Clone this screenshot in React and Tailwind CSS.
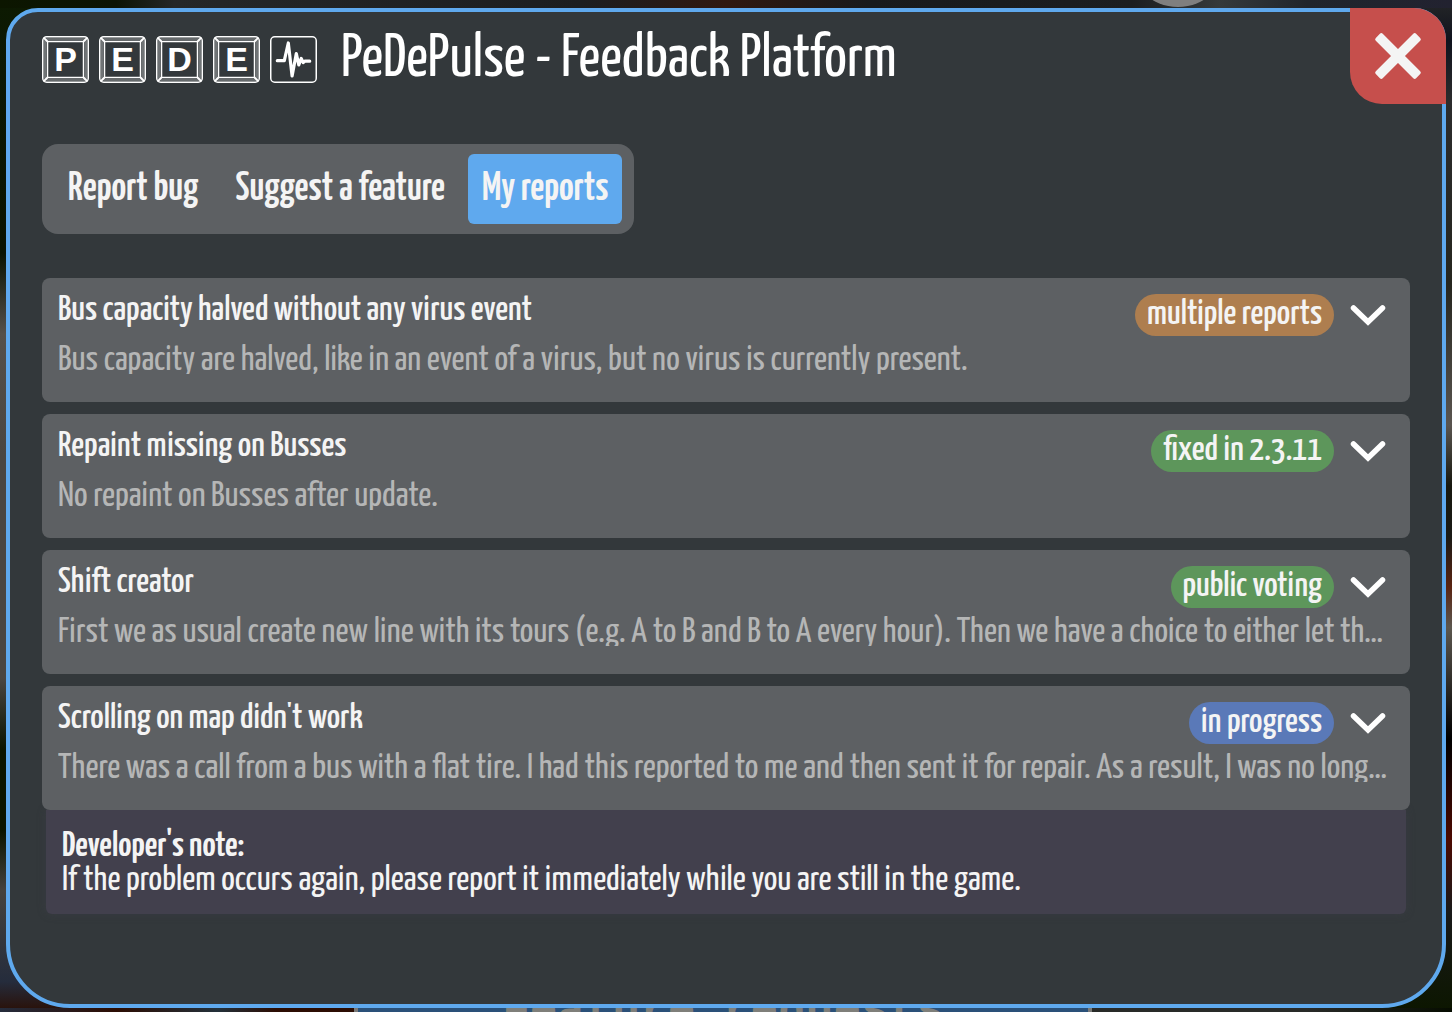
import React from "react";

const REPORTS = [
  {
    title: "Bus capacity halved without any virus event",
    text: "Bus capacity are halved, like in an event of a virus, but no virus is currently present.",
    status: "multiple reports",
    color: "bg-[#ae7e4f]",
  },
  {
    title: "Repaint missing on Busses",
    text: "No repaint on Busses after update.",
    status: "fixed in 2.3.11",
    color: "bg-[#5d965b]",
  },
  {
    title: "Shift creator",
    text: "First we as usual create new line with its tours (e.g. A to B and B to A every hour). Then we have a choice to either let th…",
    status: "public voting",
    color: "bg-[#5d965b]",
  },
  {
    title: "Scrolling on map didn't work",
    text: "There was a call from a bus with a flat tire. I had this reported to me and then sent it for repair. As a result, I was no long…",
    status: "in progress",
    color: "bg-[#5a79b8]",
    note: "If the problem occurs again, please report it immediately while you are still in the game.",
  },
];

const TABS = ["Report bug", "Suggest a feature", "My reports"];

function Key({ letter }) {
  return (
    <svg viewBox="0 0 47 47" className="size-[47px]" fill="none" stroke="#fff">
      <rect x="0.75" y="0.75" width="45.5" height="45.5" rx="4" strokeWidth="1.5" />
      <rect x="3" y="3" width="41" height="41" rx="2" strokeWidth="1.2" opacity="0.5" />
      <rect x="5.5" y="5.5" width="36" height="36" strokeWidth="1.5" />
      <path d="M1.5 1.5l4 4M45.5 1.5l-4 4M1.5 45.5l4-4M45.5 45.5l-4-4" strokeWidth="1.8" />
      <text
        x="23.5"
        y="35"
        textAnchor="middle"
        fill="#fff"
        stroke="none"
        className="font-['Liberation_Sans'] text-[34px] font-bold"
      >
        {letter}
      </text>
    </svg>
  );
}

function Logo() {
  return (
    <div className="flex gap-2.5" aria-label="PEDE Pulse">
      <Key letter="P" />
      <Key letter="E" />
      <Key letter="D" />
      <Key letter="E" />
      <svg viewBox="0 0 47 47" className="size-[47px]" fill="none" stroke="#fff">
        <rect x="0.75" y="0.75" width="45.5" height="45.5" rx="4" strokeWidth="1.5" />
        <path
          d="M7.3 24.7h7L18.3 7l3.8 33 4.2-22.5 2.5 11.5 2.4-6.500 2 4 1.5-1.300h5"
          strokeWidth="3.2"
          strokeLinecap="round"
          strokeLinejoin="round"
        />
      </svg>
    </div>
  );
}

function Backdrop() {
  return (
    <div
      aria-hidden="true"
      className="absolute inset-0 overflow-hidden bg-[linear-gradient(180deg,#0d1a02_0%,#0a1303_25%,#55504a_33%,#4a4642_45%,#4a4642_67%,#0a1400_74%,#0a1400_82%,#45423e_88%,#252c3c_97%,#2a0f05_100%)]"
    >
      <div className="absolute inset-y-0 right-0 w-1/2 bg-[linear-gradient(180deg,#252728_0%,#10131e_4%,#2c2c2d_10%,#26261f_28%,#5a5550_42%,#18180f_48%,#1a1a16_53%,#5a2412_58%,#5c574f_62%,#000_73%,#4d0a02_83%,#1a1a1a_90%,#0c1600_100%)]" />
      <div className="absolute inset-x-0 top-0 h-2 bg-[linear-gradient(90deg,#0c1600_0%,#0c1404_8%,#252728_12%,#1c1e20_40%,#301810_50%,#181a1c_60%,#1c1e20_78%,#353a3b_84%,#20252c_90%,#222230_100%)]" />
      <div className="absolute inset-x-0 bottom-0 h-1 bg-[linear-gradient(90deg,#252c3c_0%,#2c0d03_8%,#23303a_15%,#2c0d03_19%,#2c0d03_24%,#282a28_75%,#282a28_90%,#060c00_100%)]" />
      <div className="absolute -top-[93px] left-[1128px] size-[100px] rounded-full bg-[#7f7f7f]" />
      <div className="absolute top-full left-1/2 -mt-7 -ml-[372px] h-20 w-[738px] border-4 border-[#7a7a78] bg-[#2a5078] text-center font-['Liberation_Mono'] text-[46px] leading-12 font-bold text-[#7f7f7a]">
        Feature requests
      </div>
    </div>
  );
}

function Report({ report }) {
  return (
    <article>
      <div className="relative z-10 rounded-lg bg-[#5d6063] px-4 pt-4 pb-7">
        <div className="flex items-start">
          <h2 className="min-w-0 flex-1 truncate text-[36px] leading-[34px] font-medium text-[#f4f4f4]">
            {report.title}
          </h2>
          <span
            className={`h-[42px] rounded-full px-3 text-[36px] leading-[42px] font-medium whitespace-nowrap text-[#f4f4f4] ${report.color}`}
          >
            {report.status}
          </span>
          <button
            type="button"
            aria-label={`Show details of ${report.title}`}
            className="mr-0.5 ml-2.5 flex h-[42px] w-12 items-center justify-center"
          >
            <svg viewBox="0 0 36 24" className="h-6 w-9" fill="none" stroke="#fff">
              <path d="M3.5 5L18 19 32.5 5" strokeWidth="5.5" strokeLinecap="round" />
            </svg>
          </button>
        </div>
        <p className="mt-1.5 h-8 truncate text-[36px] leading-[38px] font-normal text-[#b5b6b6]">
          {report.text}
        </p>
      </div>
      {report.note && (
        <div className="mx-1 rounded-b-md bg-[#42404d] px-4 pt-5 pb-4 text-[36px] leading-[34px] text-[#f4f4f4] shadow-[0_0_8px_#42404d66]">
          <p className="font-semibold">Developer's note:</p>
          <p>{report.note}</p>
        </div>
      )}
    </article>
  );
}

export default function App() {
  const [active, setActive] = React.useState("My reports");
  return (
    <div className="relative flex min-h-screen flex-col bg-[#1b1d1c] px-1.5 pt-2 pb-1 font-['Yanone_Kaffeesatz',sans-serif]">
      <Backdrop />
      <main className="relative flex flex-1 flex-col rounded-t-[32px] rounded-b-[64px] border-4 border-[#5fa9ee] bg-[#33383b] px-8 pb-8">
        <button
          type="button"
          aria-label="Close"
          className="absolute -top-1 -right-1 flex size-24 items-center justify-center rounded-tr-[32px] rounded-bl-[32px] bg-[#c64f4c]"
        >
          <svg viewBox="-24 -24 48 48" className="size-12" fill="#f4f4f4">
            <rect x="-28.5" y="-4.9" width="57" height="9.8" rx="2" transform="rotate(45)" />
            <rect x="-28.5" y="-4.9" width="57" height="9.8" rx="2" transform="rotate(-45)" />
          </svg>
        </button>
        <header className="flex gap-6 pt-6 pr-24">
          <Logo />
          <h1 className="text-[60px] leading-12 font-normal text-white">
            PeDePulse - Feedback Platform
          </h1>
        </header>
        <nav className="mt-[60px] flex gap-[9px] self-start rounded-2xl bg-[#5d6063] px-3 py-2.5">
          {TABS.map((tab) => (
            <button
              key={tab}
              type="button"
              aria-current={tab === active ? "page" : undefined}
              onClick={() => setActive(tab)}
              className={`h-[70px] rounded-md px-3.5 pt-0.5 text-[40px] leading-10 font-semibold whitespace-nowrap text-[#f4f4f4] ${
                tab === active ? "bg-[#5fa9ee]" : ""
              }`}
            >
              {tab}
            </button>
          ))}
        </nav>
        <section className="mt-11 flex flex-col gap-3">
          {REPORTS.map((report) => (
            <Report key={report.title} report={report} />
          ))}
        </section>
      </main>
    </div>
  );
}
